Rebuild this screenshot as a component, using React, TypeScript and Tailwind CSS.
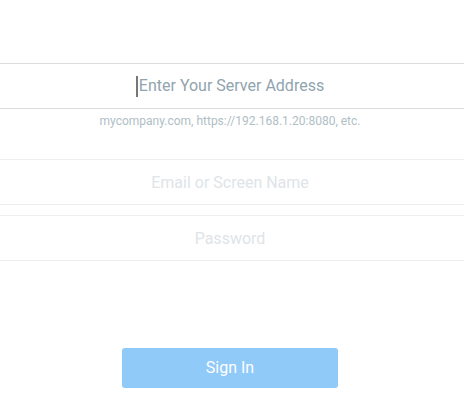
import React from 'react';

export default function App() {
  return (
    <div className="h-[417px] w-[464px] bg-white font-['Roboto',sans-serif]">
      <div className="h-[63px]" />
      <div className="flex h-[46px] items-center justify-center border-y border-[#dcdcdc] pr-[4px]">
        <span className="mr-px h-[21px] w-[2px] bg-[#777777]" />
        <span className="text-[16px] text-[#90a4ae]">Enter Your Server Address</span>
      </div>
      <p className="mt-[5px] pr-[4px] text-center text-[12px] leading-[14px] text-[#b0bec5]">
        mycompany.com, https://192.168.1.20:8080, etc.
      </p>
      <div className="mt-[31px] flex flex-col gap-[10px]">
        <input
          type="text"
          placeholder="Email or Screen Name"
          className="h-[46px] w-full border-y border-[#eeeeee] bg-white pr-[4px] text-center text-[16px] outline-none placeholder:text-[#e0e4e8]"
        />
        <input
          type="password"
          placeholder="Password"
          className="h-[46px] w-full border-y border-[#eeeeee] bg-white pr-[4px] text-center text-[16px] outline-none placeholder:text-[#e0e4e8]"
        />
      </div>
      <div className="mt-[87px] flex justify-center pr-[4px]">
        <button className="h-[40px] w-[216px] rounded-[3px] bg-[#90caf9] text-[16px] text-white">
          Sign In
        </button>
      </div>
    </div>
  );
}
